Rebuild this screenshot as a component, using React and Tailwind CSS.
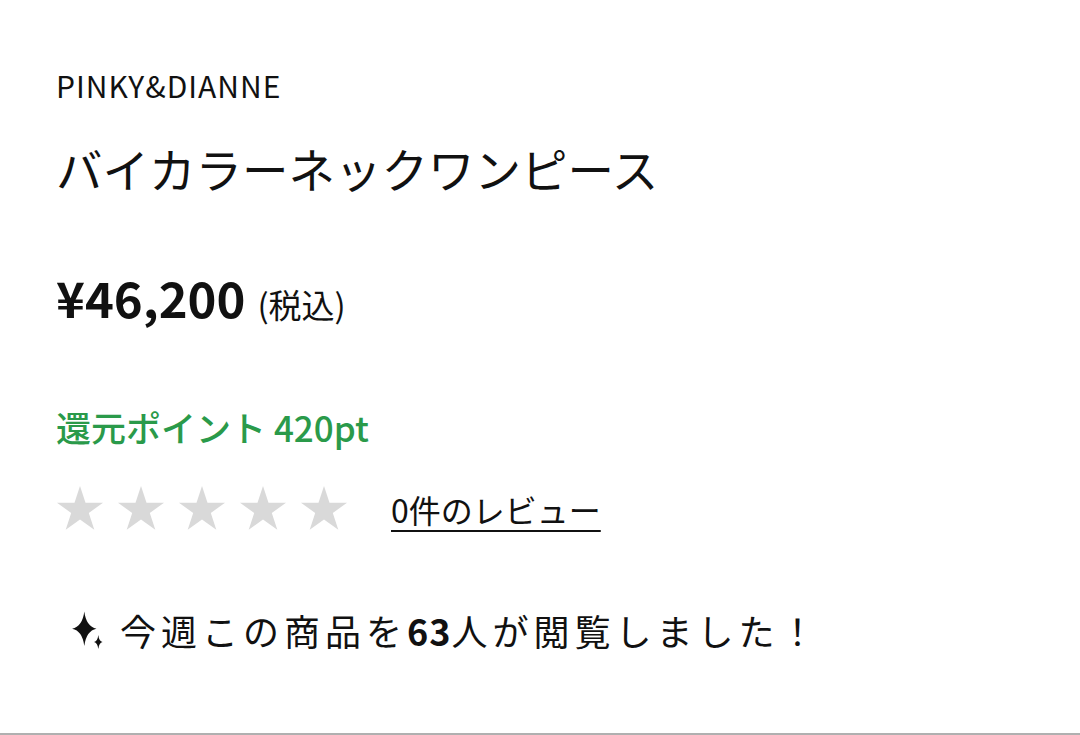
const jp = { fontFamily: '"Noto Sans CJK JP", "Noto Sans", sans-serif' };

function Star() {
  return (
    <svg width="48" height="47" viewBox="0 0 24 23" className="text-[#d9d9d9]" fill="currentColor">
      <path d="M12 0.3l2.75 8.3h8.75l-7.1 5.15 2.75 8.35L12 16.95 4.85 22.1l2.75-8.35-7.1-5.15h8.75z" />
    </svg>
  );
}

function Sparkle() {
  return (
    <svg width="40" height="40" viewBox="0 0 40 40" fill="#111">
      <path d="M14.3 1.5 Q16.2 16.6 26.5 18.7 Q16.2 20.8 14.3 35.9 Q12.4 20.8 2.1 18.7 Q12.4 16.6 14.3 1.5Z" />
      <path d="M28.3 25 Q29 31.2 32.5 32 Q29 32.8 28.3 39 Q27.6 32.8 24.1 32 Q27.6 31.2 28.3 25Z" />
    </svg>
  );
}

export default function App() {
  return (
    <div className="w-[1080px] h-[735px] bg-white border-b-2 border-[#b0b0b0] text-[#111] overflow-hidden" style={jp}>
      <div className="pl-[56px] pt-[65px] flex flex-col">
        <div className="text-[30px] leading-[40px] tracking-[1px]">PINKY&amp;DIANNE</div>
        <h1 className="mt-[35px] text-[46.5px] leading-[56px] font-normal">バイカラーネックワンピース</h1>
        <div className="mt-[69px] flex items-baseline gap-[12px]">
          <span className="text-[49px] leading-[64px] font-bold">¥46,200</span>
          <span className="text-[33px]">(税込)</span>
        </div>
        <div className="mt-[75px] text-[35px] leading-[44px] font-medium text-[#2a9a4a]">還元ポイント 420pt</div>
        <div className="mt-[36px] flex items-center h-[48px]">
          <div className="flex gap-[13px]">
            <Star />
            <Star />
            <Star />
            <Star />
            <Star />
          </div>
          <a href="#" className="ml-[43px] text-[32px] leading-[40px] underline underline-offset-[7px] decoration-2 text-[#111]">
            0件のレビュー
          </a>
        </div>
        <div className="mt-[73px] ml-[14px] flex items-center gap-[10px] text-[36px] leading-[48px] tracking-[5px]">
          <Sparkle />
          <span>今週この商品を<b className="font-bold tracking-[1px]">63</b>人が閲覧しました！</span>
        </div>
      </div>
    </div>
  );
}
